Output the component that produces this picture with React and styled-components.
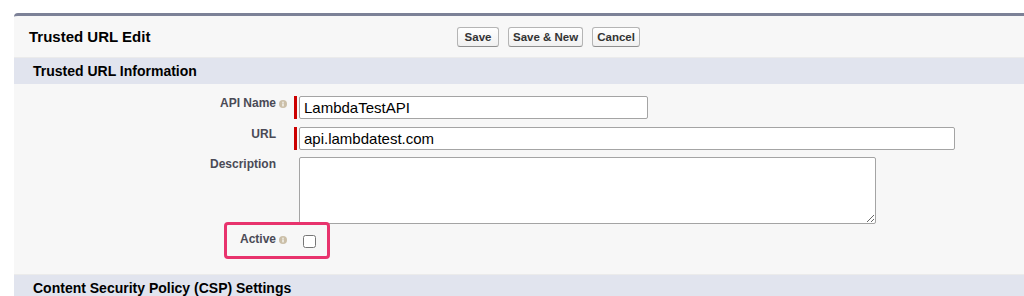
import styled, { createGlobalStyle } from "styled-components";

const GlobalStyle = createGlobalStyle`
  body {
    margin: 0;
    background: #ffffff;
    font-family: "Liberation Sans", Arial, sans-serif;
  }
`;

const Page = styled.div`
  padding: 13px 0 0 14px;
`;

const Panel = styled.div`
  background: #f7f7f7;
  border-top: 3px solid #7c8197;
  border-top-left-radius: 4px;
`;

const PanelHeader = styled.div`
  display: flex;
  align-items: center;
  height: 41px;
`;

const PanelTitle = styled.h2`
  margin: 0;
  width: 443px;
  padding-left: 15px;
  box-sizing: border-box;
  font-size: 15px;
  font-weight: bold;
  color: #000;
`;

const ButtonBar = styled.div`
  display: flex;
  gap: 9px;
`;

const Button = styled.button`
  height: 20px;
  min-width: ${(p) => p.$minWidth || 0}px;
  padding: 0 4px;
  font-family: "Liberation Sans", Arial, sans-serif;
  font-size: 11.5px;
  font-weight: bold;
  color: #333;
  background: linear-gradient(#ffffff, #f0f0f0);
  border: 1px solid #b5b5b5;
  border-bottom-color: #8f8f8f;
  border-radius: 3px;
`;

const SectionHeader = styled.h3`
  margin: 0;
  display: flex;
  align-items: center;
  height: 26px;
  padding-left: 19px;
  border-top: 1px solid #ebebeb;
  background: #e1e4ee;
  font-size: 14px;
  font-weight: bold;
  color: #000;
`;

const FormBody = styled.div`
  display: flex;
  flex-direction: column;
  gap: 7.5px;
  padding: 12px 0 23px;
`;

const Row = styled.div`
  position: relative;
  display: grid;
  grid-template-columns: 262px 1fr;
  column-gap: 18px;
`;

const Label = styled.label`
  text-align: right;
  font-size: 12px;
  font-weight: bold;
  line-height: 14px;
  color: #4a4a56;
`;

const LabelText = styled.span`
  position: relative;
  display: inline-block;
`;

const HelpIcon = styled.svg`
  position: absolute;
  left: calc(100% + 3px);
  top: 4px;
`;

const Field = styled.div`
  display: flex;
  align-items: flex-start;
  gap: 2px;
`;

const RequiredBar = styled.span`
  width: 3px;
  height: ${(p) => p.$height || 23}px;
  background: ${(p) => (p.$required ? "#c00" : "transparent")};
`;

const TextInput = styled.input`
  width: ${(p) => p.$width}px;
  height: 23px;
  box-sizing: border-box;
  padding: 0 4px;
  border: 1px solid #a4a4a4;
  border-radius: 2px;
  background: #fff;
  font-family: "Liberation Sans", Arial, sans-serif;
  font-size: 15px;
  color: #000;
`;

const TextArea = styled.textarea`
  width: 577px;
  height: 67px;
  box-sizing: border-box;
  border: 1px solid #a4a4a4;
  border-radius: 2px;
  background: #fff;
  font-family: "Liberation Sans", Arial, sans-serif;
`;

const Checkbox = styled.input`
  width: 13px;
  height: 13px;
  margin: 3px 3px 3px 4px;
`;

const Highlight = styled.div`
  position: absolute;
  left: 210px;
  top: -10px;
  width: 106px;
  height: 37px;
  box-sizing: border-box;
  border: 3px solid #e8336d;
  border-radius: 4px;
  pointer-events: none;
`;

const Help = () => (
  <HelpIcon width="8" height="8" viewBox="0 0 8 8">
    <circle cx="4" cy="4" r="4" fill="#cbbfa8" />
    <circle cx="4" cy="2.2" r="0.7" fill="#fff" />
    <rect x="3.4" y="3.4" width="1.2" height="3" fill="#fff" />
  </HelpIcon>
);

const FieldLabel = ({ children, help }) => (
  <Label>
    <LabelText>
      {children}
      {help && <Help />}
    </LabelText>
  </Label>
);

export default function App() {
  return (
    <Page>
      <GlobalStyle />
      <Panel>
        <PanelHeader>
          <PanelTitle>Trusted URL Edit</PanelTitle>
          <ButtonBar>
            <Button $minWidth={42}>Save</Button>
            <Button>Save &amp; New</Button>
            <Button>Cancel</Button>
          </ButtonBar>
        </PanelHeader>

        <SectionHeader>Trusted URL Information</SectionHeader>
        <FormBody>
          <Row>
            <FieldLabel help>API Name</FieldLabel>
            <Field>
              <RequiredBar $required />
              <TextInput $width={349} defaultValue="LambdaTestAPI" />
            </Field>
          </Row>
          <Row>
            <FieldLabel>URL</FieldLabel>
            <Field>
              <RequiredBar $required />
              <TextInput $width={656} defaultValue="api.lambdatest.com" />
            </Field>
          </Row>
          <Row>
            <FieldLabel>Description</FieldLabel>
            <Field>
              <RequiredBar />
              <TextArea />
            </Field>
          </Row>
          <Row>
            <FieldLabel help>Active</FieldLabel>
            <Field>
              <RequiredBar $height={19} />
              <Checkbox type="checkbox" />
            </Field>
            <Highlight />
          </Row>
        </FormBody>

        <SectionHeader>Content Security Policy (CSP) Settings</SectionHeader>
      </Panel>
    </Page>
  );
}
